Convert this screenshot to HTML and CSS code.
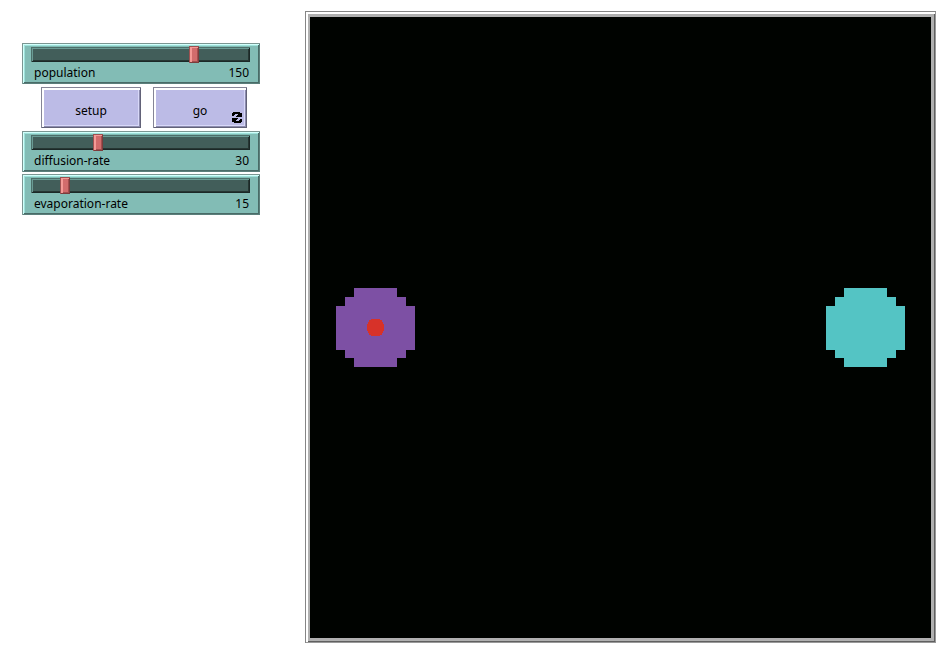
FILE: index.html
```html
<!DOCTYPE html>
<html lang="en">
<head>
<meta charset="utf-8">
<title>Model interface</title>
<link rel="stylesheet" href="styles.css">
</head>
<body>
<main class="model">
  <section class="controls">
    <div class="slider">
      <div class="track"><input id="population" type="range" min="0" max="200" value="150"></div>
      <div class="caption"><label for="population">population</label><output for="population">150</output></div>
    </div>
    <div class="buttons">
      <button class="setup" type="button">setup</button>
      <button class="go" type="button">go
        <svg class="forever" viewBox="0 0 10 11" aria-hidden="true" shape-rendering="crispEdges">
          <path d="M1 0H8V1H10V5H4V4H5V3H6V2H3V3H2V4H0V1H1Z"/>
          <path d="M9 11H2V10H0V6H6V7H5V8H4V9H7V8H8V7H10V10H9Z"/>
        </svg>
      </button>
    </div>
    <div class="rates">
      <div class="slider">
        <div class="track"><input id="diffusion" type="range" min="0" max="100" value="30"></div>
        <div class="caption"><label for="diffusion">diffusion-rate</label><output for="diffusion">30</output></div>
      </div>
      <div class="slider">
        <div class="track"><input id="evaporation" type="range" min="0" max="100" value="15"></div>
        <div class="caption"><label for="evaporation">evaporation-rate</label><output for="evaporation">15</output></div>
      </div>
    </div>
  </section>
  <section class="view">
    <svg class="world" viewBox="0 0 621 621" role="img" aria-label="World" shape-rendering="crispEdges">
      <path fill="#7d50a4" d="M44 271H87V280H96V289H105V333H96V341H87V350H44V341H35V333H26V289H35V280H44Z"/>
      <path fill="#d73229" d="M61 302H70V303H72V305H73V307H74V314H73V316H72V318H70V319H61V318H59V316H58V314H57V307H58V305H59V303H61Z"/>
      <path fill="#54c4c4" d="M534 271H577V280H586V289H595V333H586V341H577V350H534V341H525V333H516V289H525V280H534Z"/>
    </svg>
  </section>
</main>
</body>
</html>
```
FILE: styles.css
```css
* { box-sizing: border-box; }

body {
  margin: 0;
  background: #fff;
  color: #000;
  font: 12px/16px "Noto Sans", sans-serif;
}

.model {
  display: flex;
  align-items: flex-start;
  gap: 45px;
  padding: 11px 15px 11px 22px;
}

.controls {
  display: flex;
  flex: 0 0 238px;
  flex-direction: column;
  gap: 3px;
  padding-top: 32px;
}

.rates {
  display: grid;
  gap: 2px;
}

.slider {
  padding: 4px 10px 2px 9px;
  background: #82bcb5;
  box-shadow:
    inset 1px 1px #7b9692,
    inset -1px -1px #5b7f7b,
    inset 2px 2px #d2fffb,
    inset -2px -2px #496b67,
    inset 3px 3px #9de2da;
}

.track {
  display: flex;
  height: 15px;
  background: #425e5a;
  box-shadow:
    inset 1px 1px #4c6f6a,
    inset -1px -1px #1b2827,
    inset 2px 2px #6a9b94,
    inset -2px -2px #263633;
}

.track input {
  flex: none;
  width: calc(100% + 6px);
  height: 17px;
  margin: -1px -3px;
  background: none;
  appearance: none;
}

.track input::-webkit-slider-thumb {
  width: 10px;
  height: 17px;
  border: 0;
  border-radius: 0;
  background: #d26c6c;
  box-shadow:
    inset 1px 1px #9c5151,
    inset -1px -1px #7c3c3c,
    inset 3px 2px #f49a96,
    inset -2px -2px #a34f4f;
  appearance: none;
}

.caption {
  display: flex;
  justify-content: space-between;
  padding: 3px 1px 1px 3px;
}

.buttons {
  display: flex;
  gap: 12px;
  padding: 0 13px 0 19px;
}

button {
  position: relative;
  height: 41px;
  padding: 7px 0 0;
  border: 0;
  background: #bcbbe6;
  color: #000;
  font: inherit;
  box-shadow:
    inset 1px 1px #858596,
    inset -1px -1px #626278,
    inset 3px 3px #fff,
    inset -2px -2px #8c8caf,
    inset -3px -3px #d8d8f8;
}

.setup { flex: 100; }
.go { flex: 94; }

.forever {
  position: absolute;
  right: 5px;
  bottom: 5px;
  width: 10px;
  height: 11px;
}

.view {
  flex: 1;
  min-width: 0;
  padding: 6px 5px 5px;
  background: #b0b0b0;
  box-shadow:
    inset 1px 1px #858585,
    inset -1px -1px #999,
    inset 3px 3px #fff,
    inset -2px -2px #606060;
}

.world {
  display: block;
  width: 100%;
  background: #000300;
}
```
